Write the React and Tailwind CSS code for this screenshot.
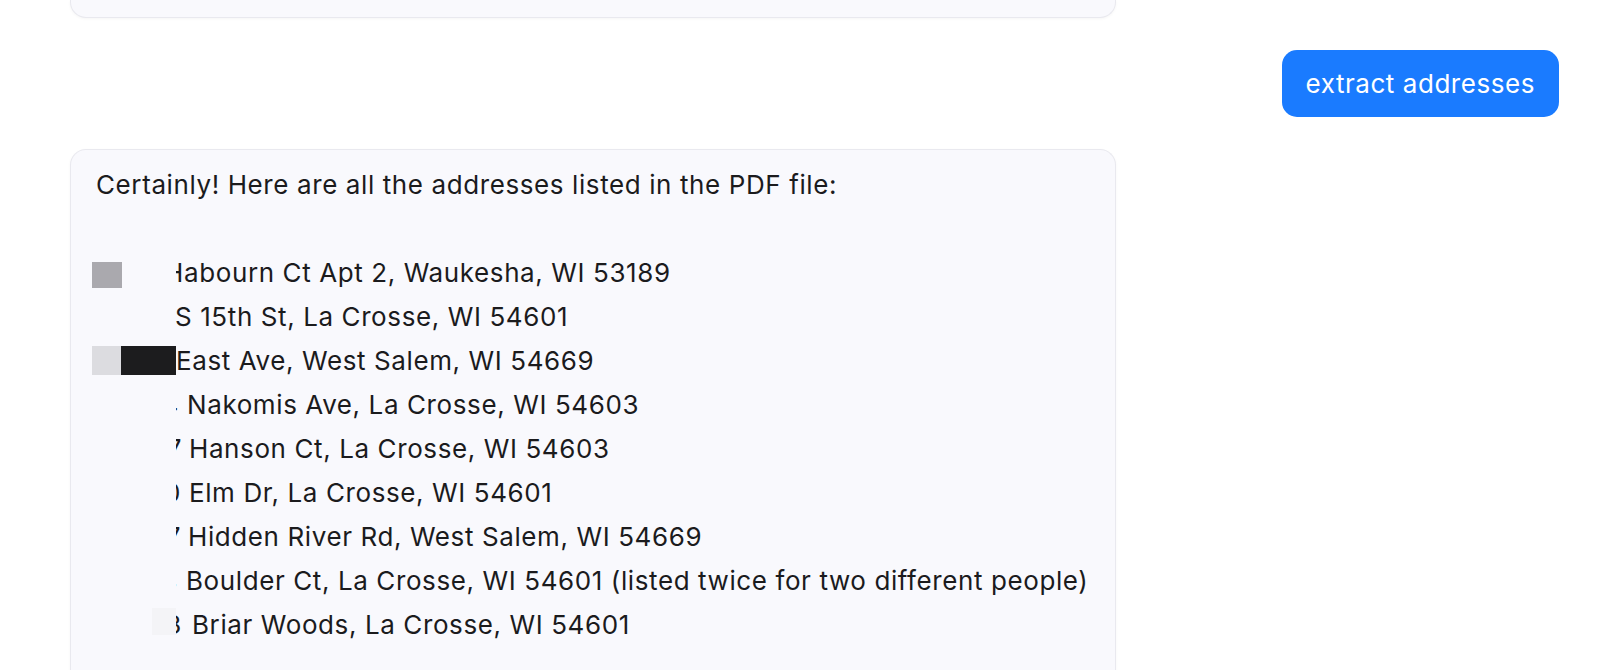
import React from "react";

const rows = [
  { ch: "H", w: "w-[8px]", ml: "ml-[0px]", rest: "abourn Ct Apt 2, Waukesha, WI 53189", blocks: "b1" },
  { ch: null, w: "", ml: "ml-[-1px]", rest: "S 15th St, La Crosse, WI 54601" },
  { ch: null, w: "", ml: "ml-[0px]", rest: "East Ave, West Salem, WI 54669", blocks: "b3" },
  { ch: "4", w: "w-[3px]", ml: "ml-[8px]", rest: "Nakomis Ave, La Crosse, WI 54603" },
  { ch: "7", w: "w-[6px]", ml: "ml-[7px]", rest: "Hanson Ct, La Crosse, WI 54603" },
  { ch: "0", w: "w-[5px]", ml: "ml-[8px]", rest: "Elm Dr, La Crosse, WI 54601" },
  { ch: "7", w: "w-[5px]", ml: "ml-[7px]", rest: "Hidden River Rd, West Salem, WI 54669" },
  { ch: "4", w: "w-[2px]", ml: "ml-[8px]", rest: "Boulder Ct, La Crosse, WI 54601 (listed twice for two different people)" },
  { ch: "3", w: "w-[6px]", ml: "ml-[10px]", rest: "Briar Woods, La Crosse, WI 54601", blocks: "b9" },
];

function Blocks({ kind }) {
  if (kind === "b1")
    return <div className="absolute left-0 top-[11px] h-[26px] w-[30px] bg-[#aaa9ae]" />;
  if (kind === "b3")
    return (
      <div className="absolute left-0 top-[7px] flex h-[29px]">
        <div className="w-[29px] bg-[#dcdce0]" />
        <div className="w-[55px] bg-[#1c1c1e]" />
      </div>
    );
  if (kind === "b9")
    return <div className="absolute left-[60px] top-[5px] h-[27px] w-[24px] bg-[#f4f4f7]" />;
  return null;
}

function Row({ r }) {
  return (
    <div className="flex h-[44px]">
      <div className="relative ml-[-4px] h-[44px] w-[84px] shrink-0">
        <Blocks kind={r.blocks} />
      </div>
      <div className="flex">
        {r.ch && (
          <span className={`flex shrink-0 justify-end overflow-hidden ${r.w}`}>
            <span className="shrink-0">{r.ch}</span>
          </span>
        )}
        <span className={`whitespace-pre ${r.ml}`}>{r.rest}</span>
      </div>
    </div>
  );
}

export default function App() {
  return (
    <div className="h-[670px] overflow-hidden bg-white font-['Inter',sans-serif] text-[#1b1b1d]">
      <div className="flex flex-col gap-[32px] pl-[70px] pr-[59px]">
        <div className="h-[18px] w-[1046px] rounded-b-[16px] border-x border-b border-[#e9e9ef] bg-[#f9f9fd] shadow-[0_1px_3px_rgba(0,0,0,0.04)]" />
        <div className="flex justify-end">
          <div className="flex h-[67px] items-center rounded-[15px] bg-[#1a7bff] px-[24px] text-[26px] tracking-[0.55px] text-white">
            extract addresses
          </div>
        </div>
        <div className="h-[560px] w-[1046px] rounded-t-[16px] border-x border-t border-[#e9e9ef] bg-[#f9f9fd] pl-[25px] pt-[13px] text-[26px] leading-[44px] tracking-[0.6px] shadow-[0_1px_3px_rgba(0,0,0,0.04)]">
          <div>Certainly! Here are all the addresses listed in the PDF file:</div>
          <div className="h-[44px]" />
          {rows.map((r, i) => (
            <Row key={i} r={r} />
          ))}
        </div>
      </div>
    </div>
  );
}
